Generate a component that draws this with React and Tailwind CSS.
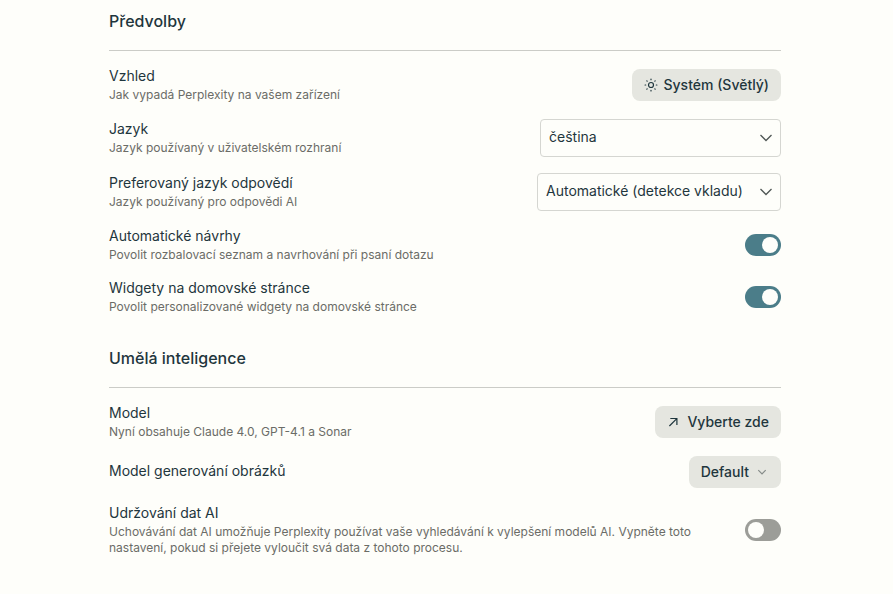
import { useState } from 'react';

function Section({ title, children }) {
  return (
    <section>
      <h2 className="border-b border-[#cbccc7] pb-[18px] text-base leading-[22px] font-medium text-[#1f363d]">
        {title}
      </h2>
      <div className="flex flex-col gap-4 pt-4">{children}</div>
    </section>
  );
}

function SettingRow({ id, label, description, children }) {
  return (
    <div className="flex items-center justify-between gap-4">
      <div className="max-w-[600px]">
        <label htmlFor={id} className="block pb-0.5 text-sm leading-[18px] text-[#1f363d]">
          {label}
        </label>
        {description && <p className="text-xs leading-4 text-[#6b6c67]">{description}</p>}
      </div>
      <div className="flex shrink-0">{children}</div>
    </div>
  );
}

function Button({ id, children }) {
  return (
    <button
      id={id}
      type="button"
      className="flex h-8 items-center gap-1.5 rounded-lg bg-[#e5e6e0] px-3 text-sm font-medium text-[#1f363d]"
    >
      {children}
    </button>
  );
}

function Select({ id, options, className }) {
  return (
    <div className="relative">
      <select
        id={id}
        className={`h-[38px] appearance-none rounded border border-[#d5d6d1] bg-transparent pr-8 pb-0.5 pl-2 text-sm text-[#1f363d] ${className}`}
      >
        {options.map((option) => (
          <option key={option}>{option}</option>
        ))}
      </select>
      <svg
        viewBox="0 0 12 8"
        className="pointer-events-none absolute top-[15px] right-[9px] h-2 w-3"
        fill="none"
        stroke="#4f5654"
        strokeWidth="1.3"
      >
        <path d="M.5 1 6 6.5 11.5 1" />
      </svg>
    </div>
  );
}

function Switch({ id, defaultChecked = false }) {
  const [checked, setChecked] = useState(defaultChecked);

  return (
    <input
      id={id}
      type="checkbox"
      role="switch"
      checked={checked}
      onChange={() => setChecked(!checked)}
      className="flex h-[22px] w-9 appearance-none items-center rounded-full bg-[#9c9d98] px-[3px] before:size-4 before:rounded-full before:bg-[#fefefa] checked:justify-end checked:bg-[#4b7d89]"
    />
  );
}

function SunIcon() {
  return (
    <svg
      viewBox="0 0 14 14"
      className="size-3.5"
      fill="none"
      stroke="currentColor"
      strokeWidth="1.2"
      strokeLinecap="round"
    >
      <circle cx="7" cy="7" r="2.5" />
      <path d="M7 1.1v.6M7 12.3v.6M1.1 7h.6M12.3 7h.6M2.8 2.8l.4.4M10.8 10.8l.4.4M2.8 11.2l.4-.4M10.8 3.2l.4-.4" />
    </svg>
  );
}

function ArrowIcon() {
  return (
    <svg
      viewBox="0 0 14 14"
      className="size-3.5"
      fill="none"
      stroke="currentColor"
      strokeWidth="1.2"
    >
      <path d="M2.4 11 9.8 3.6M3.3 3.5h6.6v6.6" />
    </svg>
  );
}

function SmallChevron() {
  return (
    <svg
      viewBox="0 0 14 14"
      className="size-3.5"
      fill="none"
      stroke="#858b88"
      strokeWidth="1.2"
    >
      <path d="M3.3 5.2 7 8.9l3.7-3.7" />
    </svg>
  );
}

export default function App() {
  return (
    <div className="min-h-screen bg-[#fefefa] pt-2.5 pr-[3px] pb-8 font-['Inter',sans-serif]">
      <main className="mx-auto flex max-w-2xl flex-col gap-8">
        <Section title="Předvolby">
          <SettingRow
            id="theme"
            label="Vzhled"
            description="Jak vypadá Perplexity na vašem zařízení"
          >
            <Button id="theme">
              <SunIcon />
              Systém (Světlý)
            </Button>
          </SettingRow>
          <SettingRow
            id="language"
            label="Jazyk"
            description="Jazyk používaný v uživatelském rozhraní"
          >
            <Select id="language" options={['čeština', 'English']} className="w-[241px]" />
          </SettingRow>
          <SettingRow
            id="answer-language"
            label="Preferovaný jazyk odpovědí"
            description="Jazyk používaný pro odpovědi AI"
          >
            <Select
              id="answer-language"
              options={['Automatické (detekce vkladu)', 'čeština']}
              className="w-[244px]"
            />
          </SettingRow>
          <SettingRow
            id="suggestions"
            label="Automatické návrhy"
            description="Povolit rozbalovací seznam a navrhování při psaní dotazu"
          >
            <Switch id="suggestions" defaultChecked />
          </SettingRow>
          <SettingRow
            id="widgets"
            label="Widgety na domovské stránce"
            description="Povolit personalizované widgety na domovské stránce"
          >
            <Switch id="widgets" defaultChecked />
          </SettingRow>
        </Section>

        <Section title="Umělá inteligence">
          <SettingRow
            id="model"
            label="Model"
            description="Nyní obsahuje Claude 4.0, GPT-4.1 a Sonar"
          >
            <Button id="model">
              <ArrowIcon />
              Vyberte zde
            </Button>
          </SettingRow>
          <SettingRow id="image-model" label="Model generování obrázků">
            <Button id="image-model">
              Default
              <SmallChevron />
            </Button>
          </SettingRow>
          <SettingRow
            id="retention"
            label="Udržování dat AI"
            description="Uchovávání dat AI umožňuje Perplexity používat vaše vyhledávání k vylepšení modelů AI. Vypněte toto nastavení, pokud si přejete vyloučit svá data z tohoto procesu."
          >
            <Switch id="retention" />
          </SettingRow>
        </Section>
      </main>
    </div>
  );
}
